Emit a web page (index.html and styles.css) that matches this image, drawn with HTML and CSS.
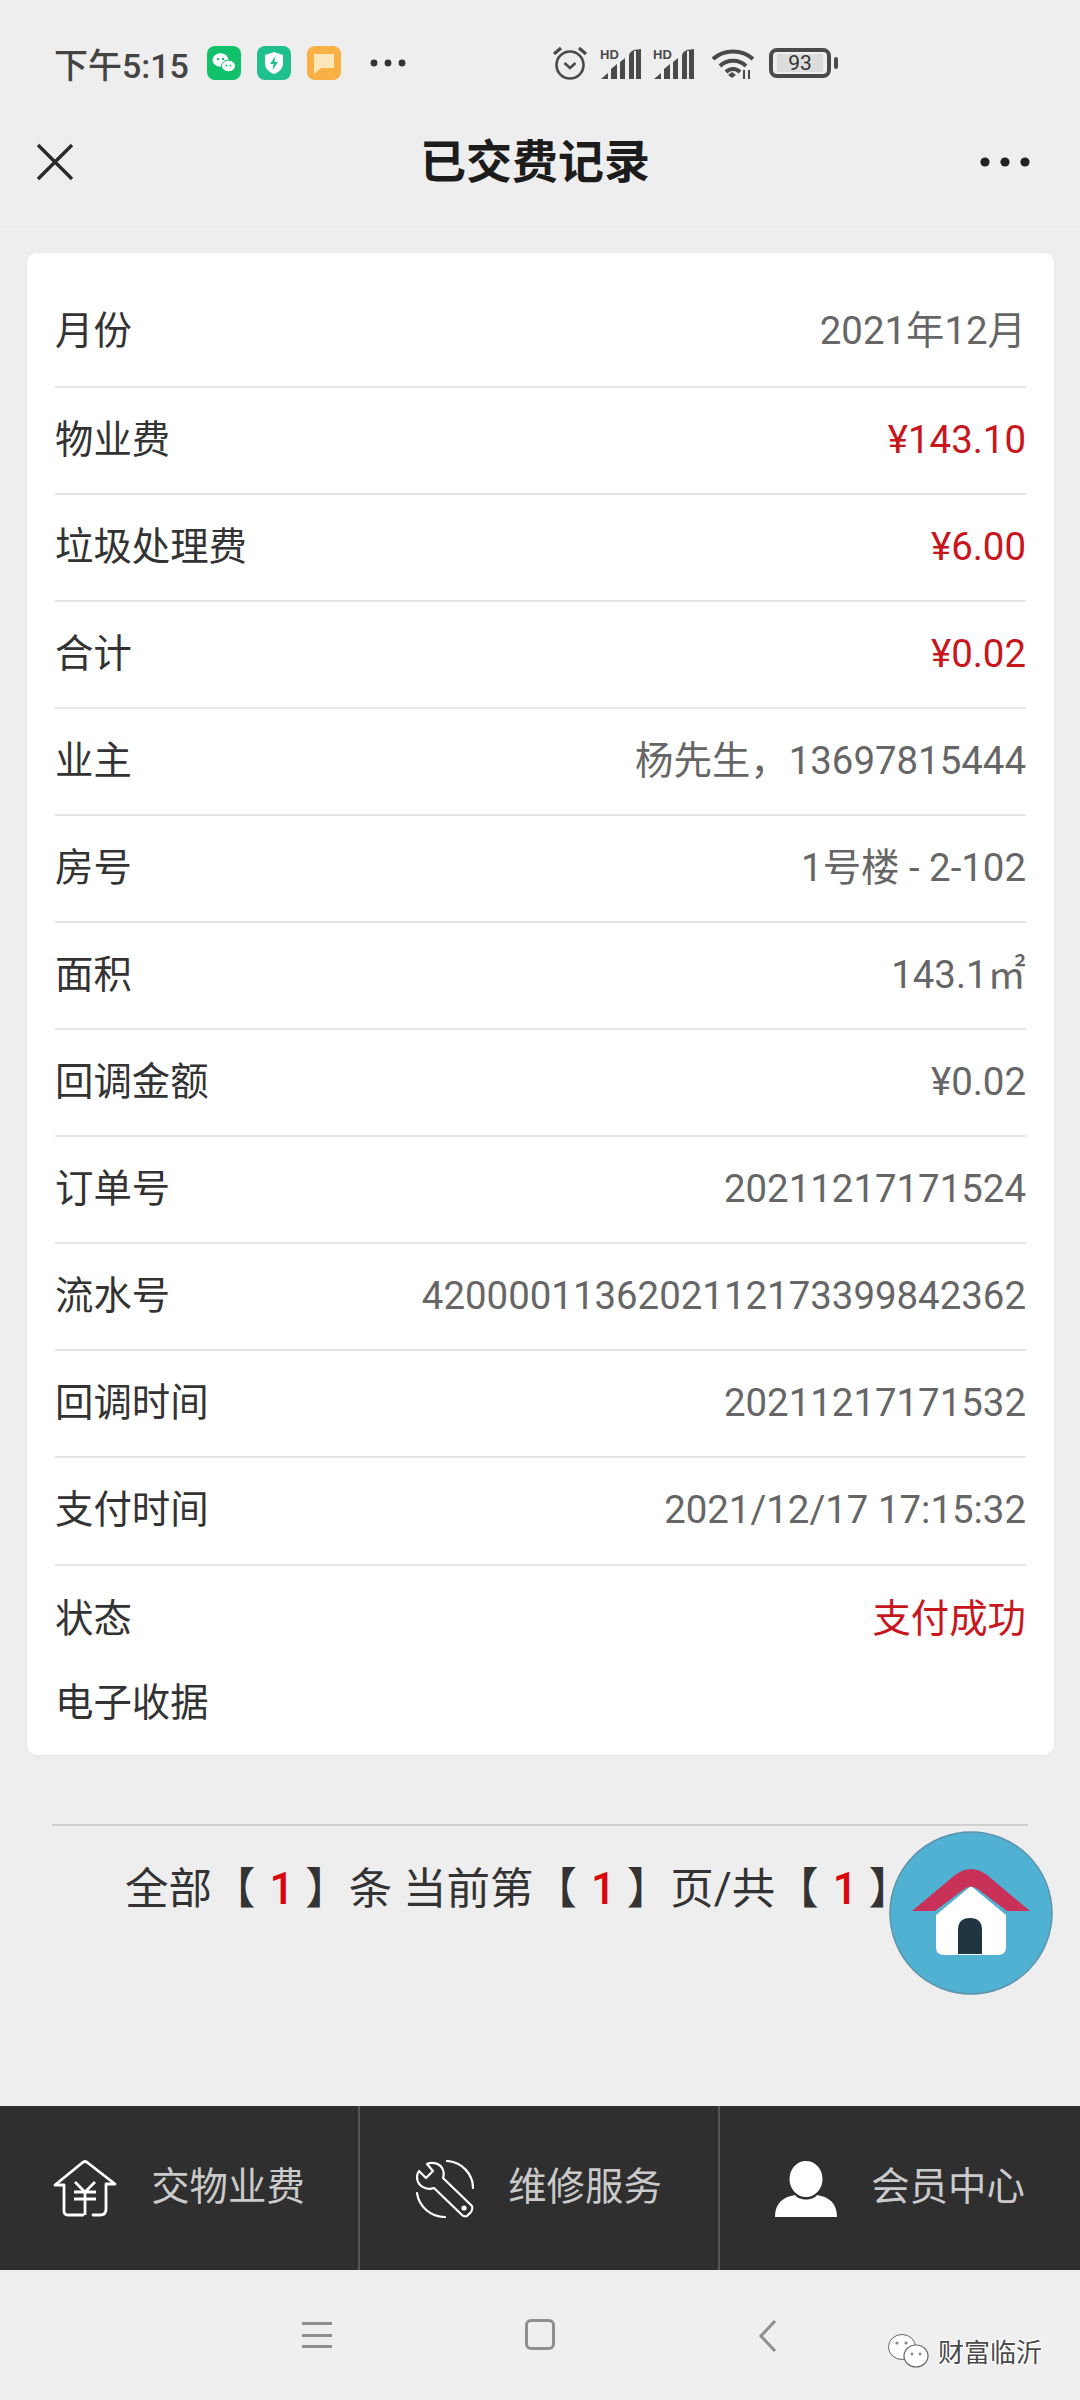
FILE: index.html
```html
<!DOCTYPE html>
<html lang="zh-CN">
<head>
<meta charset="utf-8">
<title>已交费记录</title>
<link rel="stylesheet" href="styles.css">
</head>
<body>
<div class="page">
  <div class="statusbar">
    <span class="time">下午5:15</span>
    <span class="app-icons">
      <svg class="app" viewBox="0 0 34 34"><rect width="34" height="34" rx="8" fill="#0fc168"/><ellipse cx="13.5" cy="14" rx="8" ry="6.8" fill="#fff"/><ellipse cx="21.5" cy="20" rx="7" ry="5.8" fill="#fff" stroke="#0fc168"/><circle cx="11" cy="13" r="1.2" fill="#0fc168"/><circle cx="16" cy="13" r="1.2" fill="#0fc168"/><circle cx="19.5" cy="19.5" r="1" fill="#0fc168"/><circle cx="23.5" cy="19.5" r="1" fill="#0fc168"/></svg>
      <svg class="app" viewBox="0 0 34 34"><rect width="34" height="34" rx="8" fill="#1fc08e"/><path d="M17 6 L26 9 V17 C26 23 22 26 17 28 C12 26 8 23 8 17 V9 Z" fill="#fff"/><path d="M18.5 10 L13 18 H16.5 L15.5 24 L21 16 H17.5 Z" fill="#1fc08e"/></svg>
      <svg class="app" viewBox="0 0 34 34"><rect width="34" height="34" rx="8" fill="#f9b044"/><path d="M7 8 H27 V22 H14 L7 28 Z" fill="#fde6b8"/></svg>
    </span>
    <svg class="more-small" viewBox="0 0 36 8"><circle cx="4" cy="4" r="3.4"/><circle cx="18" cy="4" r="3.4"/><circle cx="32" cy="4" r="3.4"/></svg>
    <span class="status-right">
      <svg class="alarm" viewBox="0 0 36 34"><circle cx="18" cy="19" r="13.5" fill="none" stroke="#4a4a4a" stroke-width="2.6"/><path d="M12.5 17 L18 22 L23.5 17" fill="none" stroke="#4a4a4a" stroke-width="2.6"/><path d="M2 8 L9 2 M34 8 L27 2" stroke="#4a4a4a" stroke-width="3.2"/></svg>
      <svg class="signal" viewBox="0 0 42 31"><text class="hd" x="0" y="11">HD</text><path d="M1 31 L8 25 V31 Z M11 31 V21 L17 16 V31 Z M20 31 V14 L25 10 V31 Z M29 31 V8 Q29 4 34 2 L41 1 V31 H36 V3 L34 3 V31 Z" fill="#4a4a4a"/></svg>
      <svg class="signal" viewBox="0 0 42 31"><text class="hd" x="0" y="11">HD</text><path d="M1 31 L8 25 V31 Z M11 31 V21 L17 16 V31 Z M20 31 V14 L25 10 V31 Z M29 31 V8 Q29 4 34 2 L41 1 V31 H36 V3 L34 3 V31 Z" fill="#4a4a4a"/></svg>
      <svg class="wifi" viewBox="0 0 44 31"><path d="M2 11 C13 1 31 1 42 11 M9 18 C16 11 28 11 35 18 M15 24 C19 20 25 20 29 24" fill="none" stroke="#4a4a4a" stroke-width="4"/><path d="M17 27 L21 24 L25 27 L21 30 Z" fill="#4a4a4a"/><path d="M33 22 V31 M38 22 V31" stroke="#4a4a4a" stroke-width="2"/></svg>
      <span class="battery"><span class="battery-body"><span class="battery-level">93</span></span><span class="battery-nub"></span></span>
    </span>
  </div>

  <header class="titlebar">
    <svg class="close" viewBox="0 0 38 38"><path d="M2 2 L36 36 M36 2 L2 36" stroke="#2a2a2a" stroke-width="3.4" fill="none"/></svg>
    <h1 class="title">已交费记录</h1>
    <svg class="more" viewBox="0 0 50 10"><circle cx="5" cy="5" r="4.6"/><circle cx="25" cy="5" r="4.6"/><circle cx="45" cy="5" r="4.6"/></svg>
  </header>

  <main class="card">
    <div class="row row-first"><span>月份</span><span class="val">2021年12月</span></div>
    <div class="row"><span>物业费</span><span class="val red">¥143.10</span></div>
    <div class="row"><span>垃圾处理费</span><span class="val red">¥6.00</span></div>
    <div class="row"><span>合计</span><span class="val red">¥0.02</span></div>
    <div class="row"><span>业主</span><span class="val">杨先生，13697815444</span></div>
    <div class="row"><span>房号</span><span class="val">1号楼 - 2-102</span></div>
    <div class="row"><span>面积</span><span class="val">143.1㎡</span></div>
    <div class="row"><span>回调金额</span><span class="val">¥0.02</span></div>
    <div class="row"><span>订单号</span><span class="val">20211217171524</span></div>
    <div class="row"><span>流水号</span><span class="val">4200001136202112173399842362</span></div>
    <div class="row"><span>回调时间</span><span class="val">20211217171532</span></div>
    <div class="row"><span>支付时间</span><span class="val">2021/12/17 17:15:32</span></div>
    <div class="row row-status"><span>状态</span><span class="val red">支付成功</span></div>
    <div class="row row-receipt"><span>电子收据</span></div>
  </main>

  <section class="pager">
    <p class="pager-text">全部【<b>1</b>】条 当前第【<b>1</b>】页/共【<b>1</b>】页</p>
  </section>

  <a class="fab">
    <svg viewBox="0 0 164 164"><circle cx="82" cy="82" r="81" fill="#50b1d2" stroke="#5d93ab" stroke-width="1.5"/><path d="M82 55 L117 84 V116 Q117 124 109 124 H55 Q47 124 47 116 V84 Z" fill="#fff"/><path d="M69 123 V99 Q69 87 81 87 Q93 87 93 99 V123 Z" fill="#1f3542"/><path d="M23 80 L66 44 Q82 32 98 44 L141 80 H118 L90 59 Q82 52 74 59 L46 80 Z" fill="#c93159"/></svg>
  </a>

  <nav class="tabbar">
    <div class="tab">
      <svg class="tab-house" viewBox="0 0 64 58"><path d="M11 25 H2 L29 3 Q32 0 35 3 L62 24 H53 V49 Q53 55 47 55 H40 M11 25 V51 Q11 55 15 55 H30" fill="none" stroke="#fff" stroke-width="2.8" stroke-linejoin="round" stroke-linecap="round"/><path d="M22 22 L32 32 L42 22 M21 32 H43 M21 39 H43 M32 32 V55" fill="none" stroke="#fff" stroke-width="2.8"/></svg>
      <span>交物业费</span>
    </div>
    <div class="tab">
      <svg class="tab-wrench" viewBox="0 0 58 58"><path d="M3 11 L10 18 L17 11 L11 4 C17 1 25 4 27 10 C28 13 28 15 27 18 L56 46 Q57 49 55 52 L51 56 Q48 57 46 55 L18 28 C9 31 1 25 1 17 Q1 14 3 11 Z" fill="none" stroke="#fff" stroke-width="2.2" stroke-linejoin="round"/><circle cx="48" cy="48" r="2.6" fill="#fff"/><path d="M31 1 C46 2 57 14 57 28 M1 33 C3 47 15 57 29 57" fill="none" stroke="#fff" stroke-width="2.2" stroke-linecap="round"/></svg>
      <span>维修服务</span>
    </div>
    <div class="tab">
      <svg class="tab-user" viewBox="0 0 62 56"><ellipse cx="31" cy="18" rx="16.5" ry="18" fill="#fff"/><path d="M0 56 C0 42 8 36 20 34 C24 40 38 40 42 34 C54 36 62 42 62 56 Z" fill="#fff"/></svg>
      <span>会员中心</span>
    </div>
  </nav>

  <footer class="navbar">
    <span class="nav-menu"><i></i><i></i><i></i></span>
    <span class="nav-home"></span>
    <svg class="nav-back" viewBox="0 0 20 32"><path d="M17 1 L3 16 L17 31" fill="none" stroke="#8f8f8f" stroke-width="3"/></svg>
    <span class="watermark">
      <svg class="wm-icon" viewBox="0 0 44 36"><ellipse cx="15" cy="14" rx="13.5" ry="12.5" fill="#fff" stroke="#666" stroke-width="1"/><ellipse cx="29" cy="23" rx="12" ry="11" fill="#fff" stroke="#666" stroke-width="1.2"/><circle cx="10" cy="10" r="1.6" fill="#888"/><circle cx="19" cy="10" r="1.6" fill="#888"/><circle cx="25" cy="21" r="1.4" fill="#888"/><circle cx="33" cy="21" r="1.4" fill="#888"/></svg>
      <span class="wm-text">财富临沂</span>
    </span>
  </footer>
</div>
</body>
</html>
```
FILE: styles.css
```css
* { box-sizing: border-box; }
html, body { margin: 0; padding: 0; }
body { background: #eeeeee; font-family: Roboto, "Noto Sans CJK SC", sans-serif; color: #333; }
.page { position: relative; width: 1080px; height: 2400px; display: flex; flex-direction: column; overflow: hidden; }

.statusbar { height: 98px; padding: 28px 0 0 54px; display: flex; align-items: center; flex: none; }
.time { font-size: 34px; font-weight: 500; color: #444; width: 153px; flex: none; }
.app-icons { display: flex; gap: 16px; }
.app { width: 34px; height: 34px; display: block; }
.more-small { width: 36px; height: 8px; margin-left: 29px; fill: #333; }
.status-right { display: flex; align-items: center; margin-left: 146px; }
.alarm { width: 36px; height: 34px; margin-right: 12px; }
.signal { width: 42px; height: 31px; margin-right: 11px; }
.hd { font: 700 13px "Liberation Sans", sans-serif; fill: #4a4a4a; }
.wifi { width: 44px; height: 31px; margin: 0 14px 0 5px; }
.battery { display: flex; align-items: center; gap: 3px; }
.battery-body { width: 62px; height: 30px; border: 4px solid #4a4a4a; border-radius: 8px; padding: 2px 4px; display: flex; }
.battery-level { flex: 1; background: #dcdcdc; font-size: 21px; line-height: 18px; text-align: center; color: #333; }
.battery-nub { width: 4px; height: 12px; background: #4a4a4a; border-radius: 2px; }

.titlebar { height: 130px; padding: 0 50px 0 36px; display: flex; align-items: center; justify-content: space-between; flex: none; border-bottom: 2px solid #ebebeb; }
.close { width: 38px; height: 38px; }
.title { margin: 0 0 0 16px; font-size: 46px; line-height: 60px; font-weight: 700; color: #1c1c1c; }
.more { width: 50px; height: 10px; fill: #222; }

.card { margin: 25px 26px 0 27px; padding: 0 28px 0 28px; height: 1502px; background: #fff; border-radius: 10px; flex: none; box-shadow: 0 1px 3px rgba(0,0,0,.04); }
.row { height: 107.1px; padding-bottom: 9px; display: flex; align-items: center; justify-content: space-between; border-bottom: 2px solid #e6e6e6; font-size: 38.4px; color: #333; }
/* every line carries the CJK font's metrics, so digit-only and mixed lines share one baseline */
.row span::before { content: "\3000"; font-family: "Noto Sans CJK SC", sans-serif; letter-spacing: -1em; }
.row-first { height: 134.5px; padding-top: 24px; }
.val { color: #666; }
.red { color: #c8161d; }
.row-status { height: 99px; padding-bottom: 0; border-bottom: 0; }
.row-receipt { height: 68px; padding-bottom: 0; border-bottom: 0; }

.pager { margin: 69px 52px 0; border-top: 2px solid #cfcfcf; flex: none; }
.pager-text { margin: 0; padding-top: 34px; padding-left: 73px; font-size: 43.5px; line-height: 60px; color: #333; white-space: nowrap; }
.pager-text b { color: #d8060c; font-weight: 500; padding: 0 11px 0 14px; }

.fab { position: absolute; left: 889px; top: 1831px; width: 164px; height: 164px; }
.fab svg { display: block; width: 164px; height: 164px; }

.tabbar { margin-top: auto; height: 164px; background: #2f2f2f; display: flex; flex: none; }
.tab { width: 360.4px; display: flex; align-items: center; justify-content: center; gap: 34px; border-right: 2px solid #555; font-size: 38.4px; color: #cacaca; padding-top: 2px; }
.tab:last-child { border-right: 0; }
.tab span { margin-bottom: 12px; }
.tab-house { width: 64px; height: 58px; }
.tab-wrench { width: 58px; height: 58px; }
.tab-user { width: 62px; height: 56px; }

.navbar { position: relative; height: 130px; background: #efefef; flex: none; }
.nav-menu { position: absolute; left: 302px; top: 52px; width: 30px; height: 26px; display: flex; flex-direction: column; justify-content: space-between; }
.nav-menu i { display: block; height: 3px; background: #8f8f8f; }
.nav-home { position: absolute; left: 525px; top: 49px; width: 30px; height: 31px; border: 3px solid #8f8f8f; border-radius: 6px; }
.nav-back { position: absolute; left: 758px; top: 50px; width: 20px; height: 32px; }
.watermark { position: absolute; left: 887px; top: 62px; display: flex; align-items: center; gap: 7px; }
.wm-icon { width: 44px; height: 36px; }
.wm-text { font-size: 26px; color: #4a4a4a; text-shadow: 1px 1px 0 #fff, -1px -1px 0 #fff, 1px -1px 0 #fff, -1px 1px 0 #fff; }
```
